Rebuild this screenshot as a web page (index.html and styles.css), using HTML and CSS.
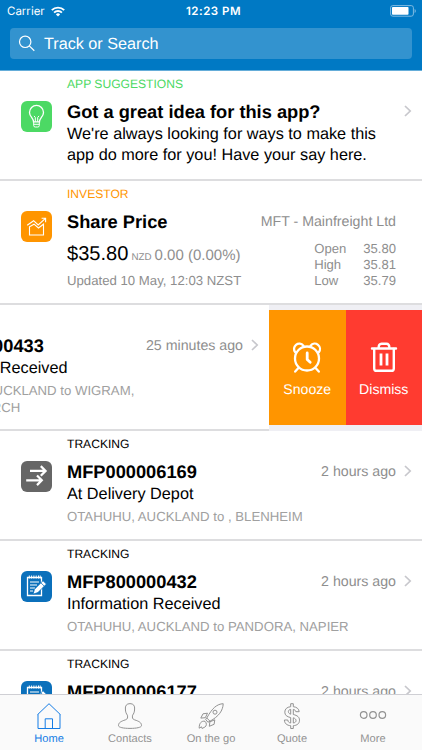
FILE: index.html
```
<!DOCTYPE html>
<html lang="en">
<head>
  <meta charset="UTF-8">
  <meta name="viewport" content="width=device-width, initial-scale=1.0">
  <title>Home</title>
  <link rel="stylesheet" href="styles.css">
</head>
<body>

<svg width="0" height="0" class="defs">
  <symbol id="note" viewBox="0 0 31 31">
    <path d="M6.5 6.5h14v18h-14z" fill="none" stroke="#fff" stroke-width="1.3"/>
    <path d="M8.3 4.5v3M10.6 4.5v3M12.9 4.5v3M15.2 4.5v3M17.5 4.5v3M19.2 4.5v3" stroke="#fff" stroke-width="1"/>
    <path d="M9 11h9M9 14h7M9 17h5M9 20h3" stroke="#fff" stroke-width="1.1"/>
    <path d="M12 23.2l1.5-5 8.5-8.500 3.400 3.400-8.500 8.500z" fill="#fff" stroke="#0b70bb" stroke-width=".8"/>
    <path d="M19.900 11.800l3.400 3.400" stroke="#0b70bb" stroke-width=".8"/>
  </symbol>
</svg>

<div class="app">
  <header class="header">
    <div class="status">
      <div class="carrier">
        <span>Carrier</span>
        <svg width="14" height="11" viewBox="0 0 14 11" fill="none" stroke="#fff" stroke-width="1.9">
          <path d="M.8 4.2a8.8 8.8 0 0 1 12.4 0M3.1 6.6a5.5 5.5 0 0 1 7.8 0"/>
          <path d="M7 10.6L4.9 8.4a3 3 0 0 1 4.2 0z" fill="#fff" stroke="none"/>
        </svg>
      </div>
      <div class="time">12:23 PM</div>
      <div class="battery">
        <svg width="27" height="12" viewBox="0 0 27 12">
          <rect x=".6" y=".6" width="22.8" height="10.6" rx="2.2" fill="none" stroke="#7fbbe2"/>
          <rect x="2" y="2" width="16.5" height="7.8" rx=".8" fill="#fff"/>
          <path d="M24.6 4v4c1.6-.6 1.6-3.4 0-4z" fill="#7fbbe2"/>
        </svg>
      </div>
    </div>
    <div class="search">
      <svg width="18" height="18" viewBox="0 0 18 18" fill="none" stroke="#fff" stroke-width="1.2">
        <circle cx="7.2" cy="6.8" r="5.7"/>
        <path d="M11.3 10.9l5 4.9"/>
      </svg>
      <span>Track or Search</span>
    </div>
  </header>

  <main class="feed">
    <section class="card">
      <div class="icon green">
        <svg width="31" height="31" viewBox="0 0 31 31" fill="none" stroke="#fff" stroke-width="1.3">
          <path d="M12.5 20.8c0-3.6-4-5.2-4-9.4a7 7 0 0 1 14 0c0 4.2-4 5.8-4 9.4z"/>
          <path d="M12.7 20.8v3.7q0 1.5 1.5 1.5h2.6q1.5 0 1.5-1.5v-3.7M12.7 23.3h5.6M14.3 20.8v-4.3l-1.3-1.6M16.7 20.8v-4.3l1.3-1.6" stroke-width="1"/>
        </svg>
      </div>
      <div class="body">
        <div class="label green-text">APP SUGGESTIONS</div>
        <div class="row">
          <h2>Got a great idea for this app?</h2>
          <svg class="chevron" width="8" height="12" viewBox="0 0 8 12"><path d="M1 1l5.2 5L1 11"/></svg>
        </div>
        <p class="text">We're always looking for ways to make this<br>app do more for you! Have your say here.</p>
      </div>
    </section>

    <section class="card investor">
      <div class="icon orange">
        <svg width="31" height="31" viewBox="0 0 31 31" fill="none" stroke="#fff" stroke-width="1.1">
          <path d="M8.500 24v-8.300l4.500-2.500 4.500 3.800 5-3.800V24z"/>
          <path d="M6.200 14.200l6.400-4.500 4.600 4.200 7-6.200M20.600 7.300h4v4"/>
        </svg>
      </div>
      <div class="body">
        <div class="label orange-text">INVESTOR</div>
        <div class="row">
          <h2>Share Price</h2>
          <span class="time-ago">MFT - Mainfreight Ltd</span>
        </div>
        <div class="shares">
          <div>
            <div class="price"><b>$35.80</b><small>NZD</small><span>0.00 (0.00%)</span></div>
            <div class="updated">Updated 10 May, 12:03 NZST</div>
          </div>
          <div class="quotes">
            <span>Open</span><span>35.80</span>
            <span>High</span><span>35.81</span>
            <span>Low</span><span>35.79</span>
          </div>
        </div>
      </div>
    </section>

    <div class="swipe">
      <section class="card">
        <div class="icon blue"><svg width="31" height="31"><use href="#note"/></svg></div>
        <div class="body">
          <div class="label">TRACKING</div>
          <div class="row">
            <h2>MFP800000433</h2>
            <span class="time-ago">25 minutes ago</span>
            <svg class="chevron" width="8" height="12" viewBox="0 0 8 12"><path d="M1 1l5.2 5L1 11"/></svg>
          </div>
          <p class="text">Information Received</p>
          <p class="address">OTAHUHU, AUCKLAND to WIGRAM,<br>CHRISTCHURCH</p>
        </div>
      </section>
      <div class="actions">
        <div class="action snooze">
          <svg width="30" height="32" viewBox="0 0 30 32" fill="none" stroke="#fff" stroke-width="2.3" stroke-linecap="round" stroke-linejoin="round">
            <circle cx="15" cy="17.500" r="12"/>
            <path d="M3.200 11.200A5 5 0 1 1 11.400 4.600M26.800 11.200A5 5 0 1 0 18.600 4.600"/>
            <path d="M15.200 12v6.400l3 2.800" stroke-width="2.8"/>
            <path d="M6.400 27l-3.200 3.600M23.600 27l3.200 3.600"/>
          </svg>
          <span>Snooze</span>
        </div>
        <div class="action dismiss">
          <svg width="30" height="32" viewBox="0 0 30 32" fill="none" stroke="#fff" stroke-width="2.4" stroke-linecap="round" stroke-linejoin="round">
            <path d="M3 7.500h24M9.600 7c0-2.800 1-4.300 3-4.300h4.800c2 0 3 1.500 3 4.300"/>
            <path d="M5.200 8v19.400q0 2.400 2.400 2.400h14.800q2.400 0 2.400-2.400V8"/>
            <path d="M12 12.500v12M18 12.500v12" stroke-width="2.8" stroke-linecap="butt"/>
          </svg>
          <span>Dismiss</span>
        </div>
      </div>
    </div>

    <section class="card">
      <div class="icon grey">
        <svg width="31" height="31" viewBox="0 0 31 31" fill="none" stroke="#fff" stroke-width="2.2">
          <path d="M9 9.900h15M19.800 5.100l4.800 4.800-4.800 4.800M5.200 19.300h15M16 14.500l4.800 4.800-4.800 4.800"/>
        </svg>
      </div>
      <div class="body">
        <div class="label">TRACKING</div>
        <div class="row">
          <h2>MFP000006169</h2>
          <span class="time-ago">2 hours ago</span>
          <svg class="chevron" width="8" height="12" viewBox="0 0 8 12"><path d="M1 1l5.2 5L1 11"/></svg>
        </div>
        <p class="text">At Delivery Depot</p>
        <p class="address">OTAHUHU, AUCKLAND to , BLENHEIM</p>
      </div>
    </section>

    <section class="card">
      <div class="icon blue"><svg width="31" height="31"><use href="#note"/></svg></div>
      <div class="body">
        <div class="label">TRACKING</div>
        <div class="row">
          <h2>MFP800000432</h2>
          <span class="time-ago">2 hours ago</span>
          <svg class="chevron" width="8" height="12" viewBox="0 0 8 12"><path d="M1 1l5.2 5L1 11"/></svg>
        </div>
        <p class="text">Information Received</p>
        <p class="address">OTAHUHU, AUCKLAND to PANDORA, NAPIER</p>
      </div>
    </section>

    <section class="card">
      <div class="icon blue"><svg width="31" height="31"><use href="#note"/></svg></div>
      <div class="body">
        <div class="label">TRACKING</div>
        <div class="row">
          <h2>MFP000006177</h2>
          <span class="time-ago">2 hours ago</span>
          <svg class="chevron" width="8" height="12" viewBox="0 0 8 12"><path d="M1 1l5.2 5L1 11"/></svg>
        </div>
      </div>
    </section>
  </main>

  <nav class="tabs">
    <div class="tab active">
      <svg width="28" height="28" viewBox="0 0 28 28">
        <path d="M3 12.2V26.5h22V12.2M2.6 12.6L14 1.7l11.4 10.9M10.2 26.5v-9.7h7.3v9.7"/>
      </svg>
      <span>Home</span>
    </div>
    <div class="tab">
      <svg width="28" height="28" viewBox="0 0 28 28">
        <path d="M14 1.6c-3.5 0-5 2.400-4.600 5.400 0 3.200 1 4.800 2 6.200.5 2.700.2 3.800-1.900 4.600-4.800 1.600-7 2.800-7 5.800 0 1.800 5 2.800 11.500 2.800s11.500-1 11.500-2.800c0-3-2.200-4.200-7-5.800-2.100-.8-2.400-1.900-1.900-4.600 1-1.400 2-3 2-6.200.4-3-1.100-5.400-4.600-5.400z"/>
      </svg>
      <span>Contacts</span>
    </div>
    <div class="tab">
      <svg width="28" height="28" viewBox="0 0 28 28">
        <path d="M26.200 1.700c-6.200.3-11 4.300-16.400 14.300l3.200 3.200c8.600-4.700 13-10.500 13.200-17.500z"/>
        <circle cx="18" cy="10.200" r="2"/>
        <path d="M10.500 11.200l-4.500.6-2.200 4.300 4.500-.4zM17.800 17.800l-.7 4.500-4.800 2 .6-4.500zM8 19.300c-3.300-.8-6 1.800-5.800 6.900l2.300-1.400.6 1.700 2.800-1.500c1.900-1 2-3.900.1-5.700zM9.800 16l-1.200 1.300 2.300 2.900 2.100-1"/>
      </svg>
      <span>On the go</span>
    </div>
    <div class="tab">
      <svg width="28" height="28" viewBox="0 0 28 28">
        <path d="M12.700 1.700h2.600v3c3.500.3 5.600 2.200 5.900 5h-3.400c-.2-1.200-1-2-2.500-2.300v5.100c4.200 1 6.200 2.600 6.200 5.700 0 3.400-2.400 5.200-6.200 5.500v2.800h-2.600v-2.800c-3.900-.3-6.200-2.300-6.300-5.700h3.400c.2 1.900 1.200 2.800 2.900 3v-5.400c-3.800-.9-5.900-2.400-5.900-5.400 0-3.200 2.200-5.200 5.900-5.500zM12.700 7.400c-3.100.3-3.100 4 0 4.800zM15.300 15.800v5.200c3.600-.4 3.700-4.200 0-5.200z"/>
      </svg>
      <span>Quote</span>
    </div>
    <div class="tab more">
      <svg width="28" height="28" viewBox="0 0 28 28">
        <circle cx="4.700" cy="13" r="3.300"/><circle cx="14" cy="13" r="3.300"/><circle cx="23.300" cy="13" r="3.300"/>
      </svg>
      <span>More</span>
    </div>
  </nav>
</div>

</body>
</html>
```
FILE: styles.css
```
* {
  box-sizing: border-box;
}
body {
  margin: 0;
  font-family: "Liberation Sans", Arial, sans-serif;
  background-color: #fff;
  text-rendering: geometricPrecision;
}
svg {
  display: block;
  flex-shrink: 0;
}
.defs {
  display: none;
}
.app {
  display: flex;
  flex-direction: column;
  height: 750px;
  overflow: hidden;
}

/* Header */
.header {
  height: 71px;
  flex-shrink: 0;
  background-color: #0079c4;
  border-bottom: 1px solid #65add9;
  color: #fff;
}
.status {
  display: grid;
  grid-template-columns: 1fr auto 1fr;
  align-items: center;
  height: 22px;
  padding: 0 5px 0 7px;
  font-family: Inter, sans-serif;
  font-size: 11.5px;
}
.carrier {
  display: flex;
  align-items: center;
  gap: 6px;
}
.time {
  padding-left: 3px;
  font-weight: 600;
  letter-spacing: 0.5px;
}
.battery {
  justify-self: end;
}
.search {
  display: flex;
  align-items: center;
  gap: 8px;
  height: 31px;
  margin: 6px 10px 0;
  padding-left: 8px;
  border-radius: 4px;
  background-color: #3393cf;
  font-size: 16.2px;
}
.search span {
  padding-top: 1px;
}

/* Feed */
.feed {
  flex: 1;
  min-height: 0;
  overflow: hidden;
}
.card {
  display: flex;
  height: 110px;
  padding: 5px 10px 0 20.5px;
  border-bottom: 2px solid #dddddf;
  background-color: #fff;
}
.icon {
  width: 31px;
  height: 31px;
  flex-shrink: 0;
  margin: 25px 15.5px 0 0;
  border-radius: 6px;
}
.green { background-color: #4cd964; }
.orange { background-color: #ff9500; }
.grey { background-color: #666; }
.blue { background-color: #0b70bb; }
.body {
  flex: 1;
}
.label {
  font-size: 12.1px;
  line-height: 16px;
}
.green-text { color: #4cd964; }
.orange-text { color: #ff9500; }
.row {
  display: flex;
  align-items: center;
  height: 24px;
  margin-top: 8px;
}
h2 {
  flex: 1;
  margin: 0;
  font-size: 18.25px;
  line-height: 24px;
  white-space: nowrap;
}
.time-ago {
  font-size: 14.2px;
  color: #8e8e8e;
}
.chevron {
  margin: -3px 0 0 8px;
  fill: none;
  stroke: #c7c7cc;
  stroke-width: 1.7;
}
.text {
  margin: 0;
  font-size: 16.25px;
  line-height: 21px;
}
.address {
  margin: 3px 0 0;
  font-size: 13.2px;
  line-height: 17px;
  color: #a0a0a0;
}

/* Share price */
.investor {
  height: 124px;
  padding-right: 26px;
}
.shares {
  display: flex;
  justify-content: space-between;
  color: #8e8e8e;
}
.price {
  display: flex;
  align-items: baseline;
  height: 36px;
  padding-top: 9px;
  font-size: 15px;
}
.price b {
  font-size: 20.1px;
  font-weight: normal;
  color: #000;
}
.price small {
  margin: 0 3px;
  font-size: 9.8px;
}
.updated {
  margin-top: 2px;
  font-size: 13.2px;
  line-height: 17px;
}
.quotes {
  display: grid;
  grid-template-columns: 49px auto;
  align-content: start;
  padding-top: 7px;
  font-size: 13.1px;
  line-height: 16.2px;
}

/* Swiped row */
.swipe {
  display: flex;
  height: 126px;
  background-color: #efeff4;
}
.swipe .card {
  width: 422px;
  height: 126px;
  flex-shrink: 0;
  margin-left: -153px;
}
.actions {
  display: flex;
  width: 153px;
  height: 115px;
  margin-top: 4.6px;
}
.action {
  display: flex;
  flex-direction: column;
  align-items: center;
  flex: 1;
  padding-top: 31px;
  color: #fff;
  font-size: 14.1px;
  line-height: 17px;
}
.action span {
  margin-top: 8px;
}
.snooze { background-color: #ff9500; }
.dismiss { background-color: #ff3b30; }

/* Tab bar */
.tabs {
  display: flex;
  height: 56px;
  flex-shrink: 0;
  padding: 7px 8.5px 0;
  border-top: 1.5px solid #cfcfd4;
  background-color: #fafafa;
}
.tab {
  display: flex;
  flex-direction: column;
  align-items: center;
  flex: 1;
  font-size: 11.1px;
  line-height: 14px;
  color: #929292;
}
.tab svg {
  fill: none;
  stroke: #929292;
  stroke-width: 1;
}
.tab span {
  margin-top: 2px;
}
.tab.active {
  color: #147ce5;
}
.tab.active svg {
  stroke: #147ce5;
}
.tab.more svg {
  stroke-width: 1.2;
}
```
